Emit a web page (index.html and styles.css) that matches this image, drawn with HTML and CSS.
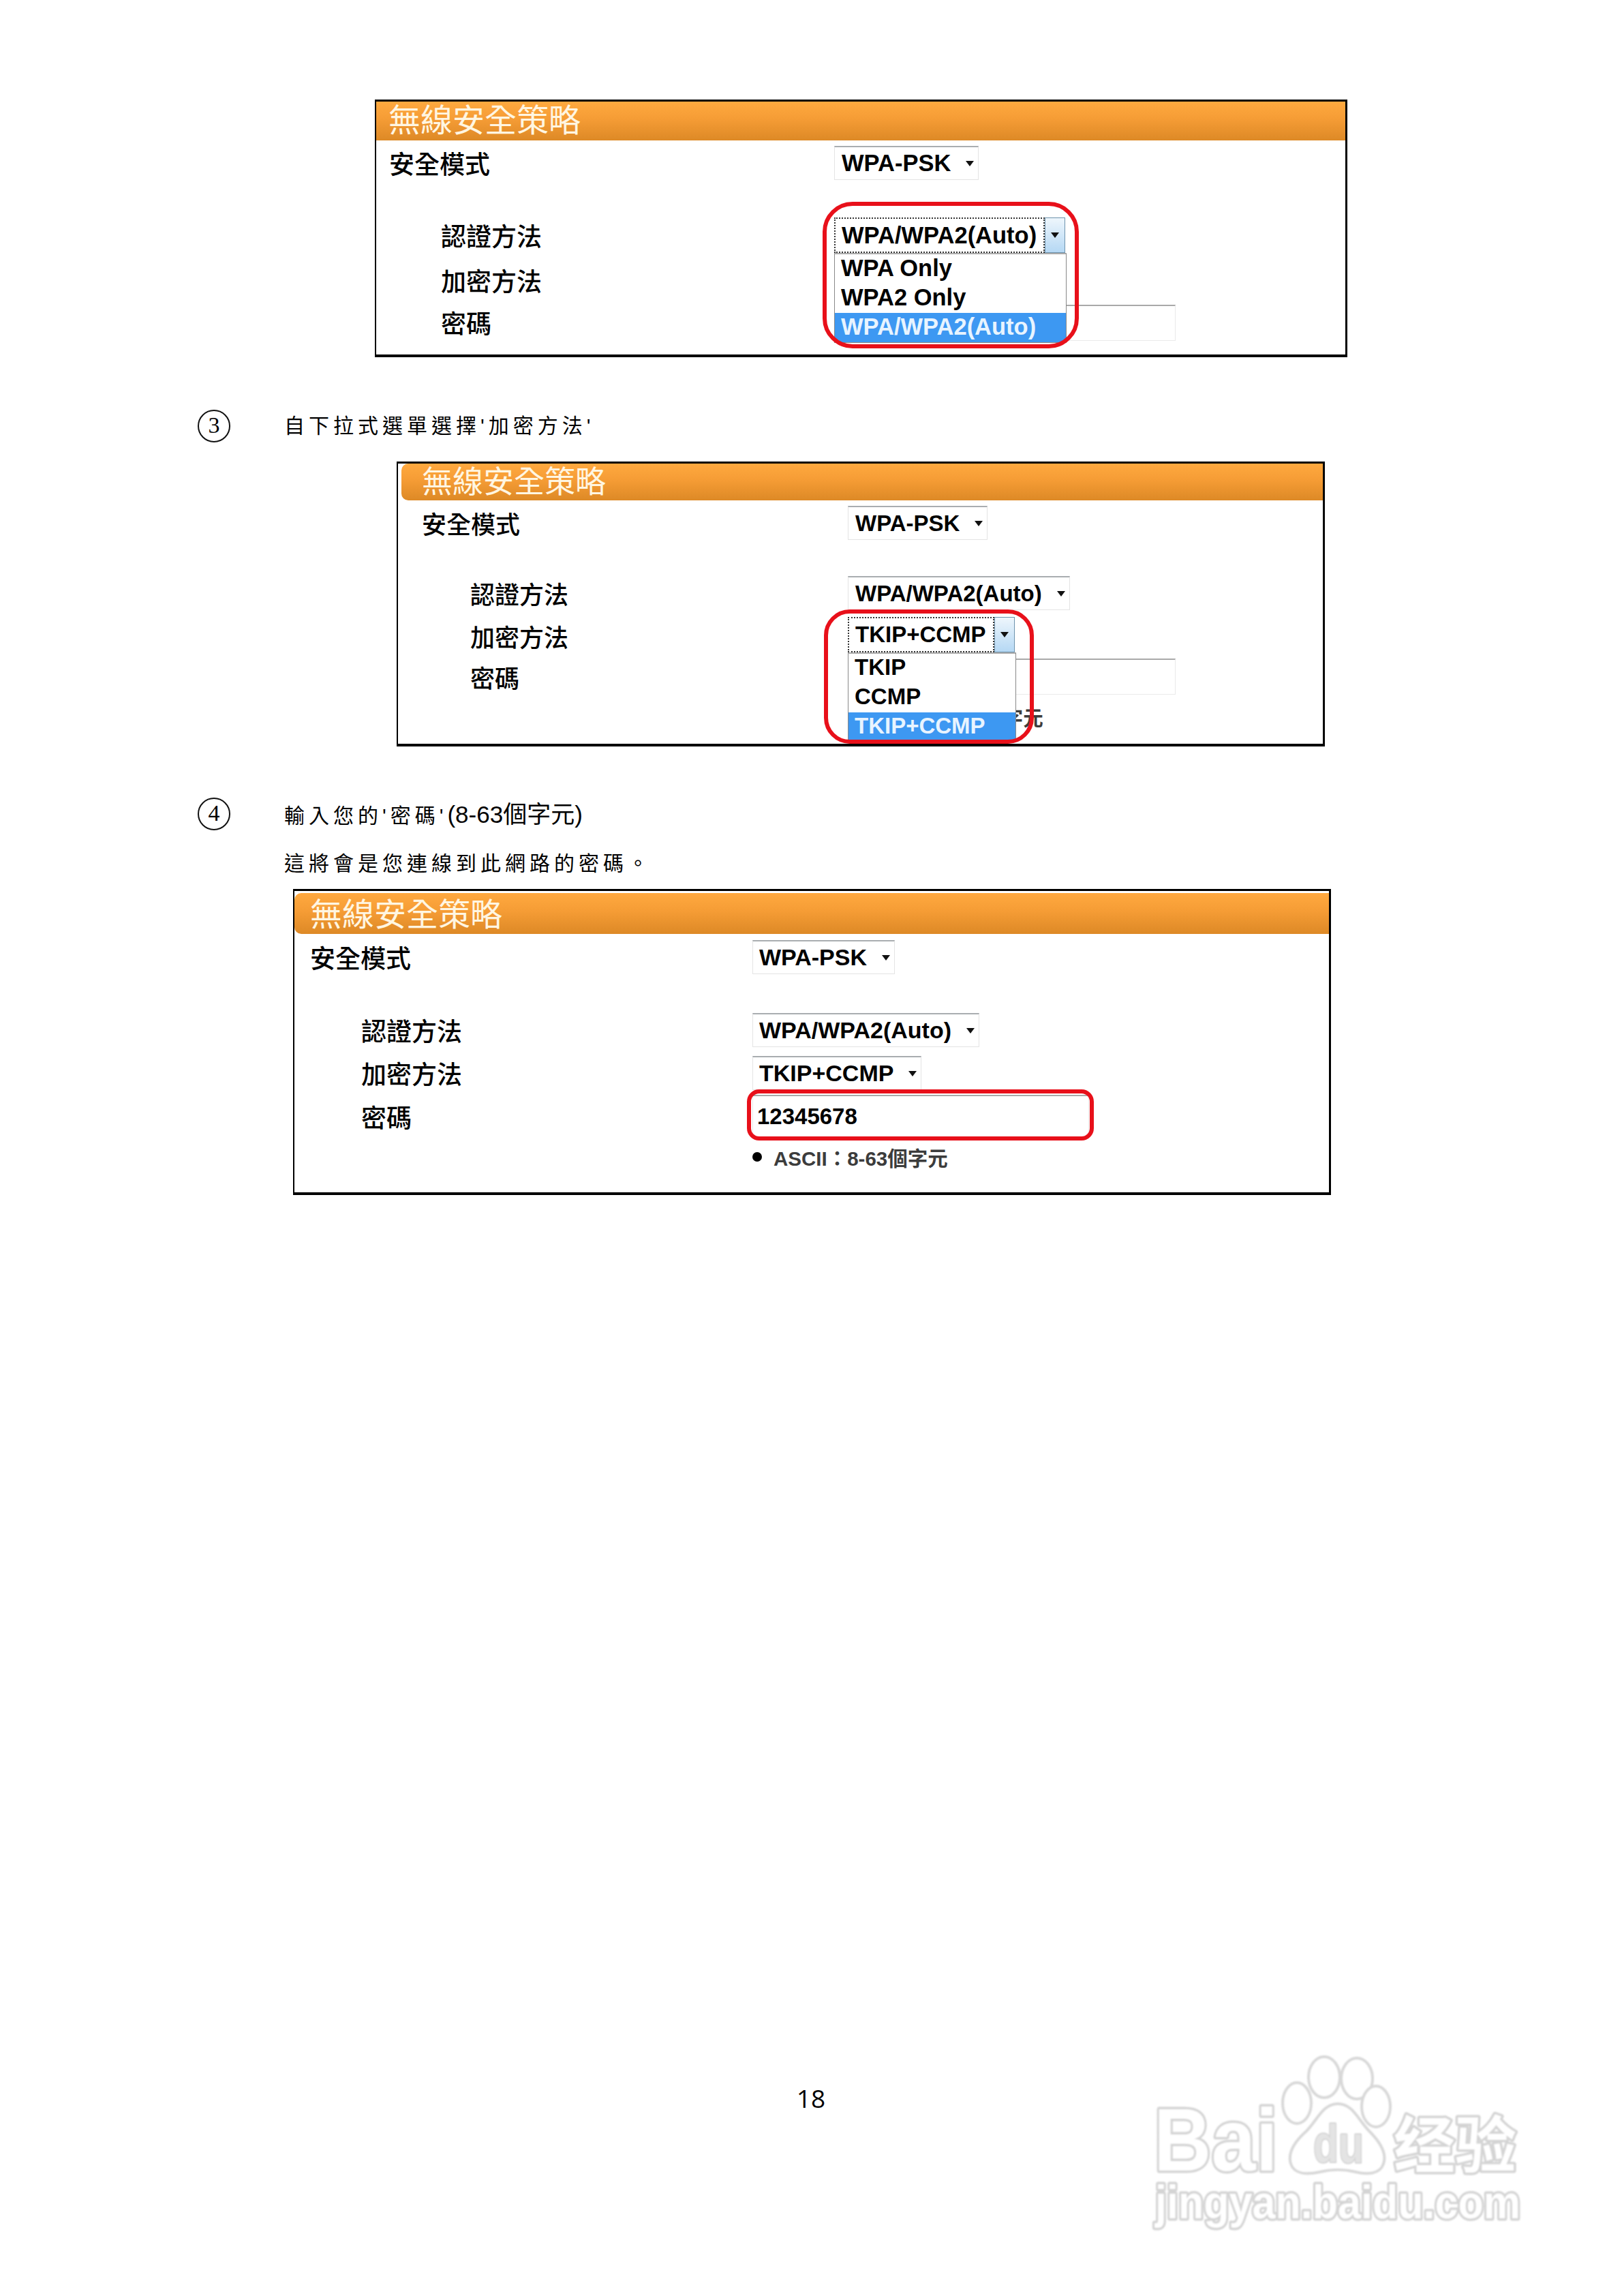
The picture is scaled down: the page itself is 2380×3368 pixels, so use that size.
FILE: index.html
```html
<!DOCTYPE html>
<html lang="zh-Hant">
<head>
  <meta charset="UTF-8">
  <title>無線安全策略</title>
  <link rel="stylesheet" href="styles.css">
</head>
<body>
  <div class="page">
    <!-- 認證方法 -->
    <section class="panel panel-auth">
      <h2 class="panel-title">無線安全策略</h2>
      <div class="row row-mode">
        <div class="label">安全模式</div>
        <div class="select">WPA-PSK<i class="arrow"></i></div>
      </div>
      <div class="row row-auth">
        <div class="label sub">認證方法</div>
        <div class="select open">
          <span class="focus-text">WPA/WPA2(Auto)</span><span class="drop-btn"><i class="arrow"></i></span>
          <ul class="popup">
            <li>WPA Only</li>
            <li>WPA2 Only</li>
            <li class="selected">WPA/WPA2(Auto)</li>
          </ul>
        </div>
      </div>
      <div class="row row-enc">
        <div class="label sub">加密方法</div>
      </div>
      <div class="row row-pass">
        <div class="label sub">密碼</div>
        <div class="input"></div>
      </div>
      <div class="ring"></div>
    </section>

    <div class="step step-three">
      <div class="num">3</div>
      <p>自下拉式選單選擇'加密方法'</p>
    </div>

    <!-- 加密方法 -->
    <section class="panel panel-enc">
      <h2 class="panel-title">無線安全策略</h2>
      <div class="row row-mode">
        <div class="label">安全模式</div>
        <div class="select">WPA-PSK<i class="arrow"></i></div>
      </div>
      <div class="row row-auth">
        <div class="label sub">認證方法</div>
        <div class="select">WPA/WPA2(Auto)<i class="arrow"></i></div>
      </div>
      <div class="row row-enc">
        <div class="label sub">加密方法</div>
        <div class="select open">
          <span class="focus-text">TKIP+CCMP</span><span class="drop-btn"><i class="arrow"></i></span>
          <ul class="popup">
            <li>TKIP</li>
            <li>CCMP</li>
            <li class="selected">TKIP+CCMP</li>
          </ul>
        </div>
      </div>
      <div class="row row-pass">
        <div class="label sub">密碼</div>
        <div class="input"></div>
      </div>
      <div class="row row-hint">
        <div></div>
        <div class="hint"><span class="bullet"></span>ASCII：8-63個字元</div>
      </div>
      <div class="ring"></div>
    </section>

    <div class="step step-four">
      <div class="num">4</div>
      <p>輸入您的'密碼'<span class="range">(8-63個字元)</span></p>
    </div>
    <p class="step-note">這將會是您連線到此網路的密碼。</p>

    <!-- 密碼 -->
    <section class="panel panel-pass">
      <h2 class="panel-title">無線安全策略</h2>
      <div class="row row-mode">
        <div class="label">安全模式</div>
        <div class="select">WPA-PSK<i class="arrow"></i></div>
      </div>
      <div class="row row-auth">
        <div class="label sub">認證方法</div>
        <div class="select">WPA/WPA2(Auto)<i class="arrow"></i></div>
      </div>
      <div class="row row-enc">
        <div class="label sub">加密方法</div>
        <div class="select">TKIP+CCMP<i class="arrow"></i></div>
      </div>
      <div class="row row-pass">
        <div class="label sub">密碼</div>
        <div class="input">12345678</div>
      </div>
      <div class="row row-hint">
        <div></div>
        <div class="hint"><span class="bullet"></span>ASCII：8-63個字元</div>
      </div>
      <div class="ring"></div>
    </section>

    <div class="page-num">18</div>

    <svg class="watermark" viewBox="0 0 541 262" width="541" height="262">
      <g class="mark-shape">
        <ellipse cx="250" cy="33" rx="23" ry="30"/>
        <ellipse cx="298" cy="35" rx="23" ry="30"/>
        <ellipse cx="210" cy="71" rx="21" ry="30"/>
        <ellipse cx="326" cy="76" rx="21" ry="30"/>
      </g>
      <text class="mark-text" x="0" y="170" font-size="130" textLength="182" lengthAdjust="spacingAndGlyphs">Bai</text>
      <path class="mark-shape" d="M270 72 C292 72 300 96 316 112 C334 130 342 146 337 160 C332 176 312 176 296 172 C280 168 260 168 244 172 C226 176 206 176 201 160 C196 144 206 128 224 112 C240 96 248 72 270 72 Z"/>
      <text class="mark-inner" x="234" y="158" font-size="78" textLength="74" lengthAdjust="spacingAndGlyphs">du</text>
      <text class="mark-text" x="352" y="165" font-size="90">经验</text>
      <text class="mark-text" x="2" y="240" font-size="68" textLength="536" lengthAdjust="spacingAndGlyphs">jingyan.baidu.com</text>
    </svg>
  </div>
</body>
</html>
```

FILE: styles.css
```css
body {
  margin: 0;
  background: #fff;
  color: #000;
  font-family: "Noto Sans CJK TC", "Liberation Sans", sans-serif;
}

.page {
  position: relative;
  width: 2380px;
  height: 3368px;
  overflow: hidden;
  padding-top: 146px;
  box-sizing: border-box;
}

/* panels */
.panel {
  position: relative;
  box-sizing: border-box;
  border: 2px solid #000;
  border-top-width: 3px;
  border-bottom-width: 4px;
  border-right-width: 3px;
  background: #fff;
}

.panel-title {
  margin: 0;
  box-sizing: border-box;
  display: flex;
  align-items: center;
  font-weight: 400;
  color: #fff6e2;
  background: linear-gradient(#ffa93f, #f59c35 45%, #dd8926);
}

.panel-auth {
  margin-left: 550px;
  width: 1427px;
  height: 378px;
  --ctrl-x: 672px;
  --label-x: 19px;
  --sub-x: 95px;
  --label-size: 37px;
  --select-size: 34.5px;
}

.panel-auth .panel-title {
  height: 57px;
  padding: 0 0 11px 18px;
  font-size: 47px;
}

.panel-enc {
  margin-left: 582px;
  margin-top: 28px;
  width: 1362px;
  height: 418px;
  --ctrl-x: 660px;
  --label-x: 35px;
  --sub-x: 106px;
  --label-size: 36px;
  --select-size: 33px;
}

.panel-enc .panel-title {
  height: 54px;
  margin-left: 5px;
  padding: 0 0 8px 30px;
  font-size: 45px;
  border-bottom-left-radius: 10px;
  border-top-left-radius: 10px;
}

.panel-pass {
  margin-left: 430px;
  margin-top: 17px;
  width: 1523px;
  height: 449px;
  --ctrl-x: 672px;
  --label-x: 23px;
  --sub-x: 98px;
  --label-size: 37px;
  --select-size: 34px;
}

.panel-pass .panel-title {
  height: 60px;
  margin-top: 3px;
  padding: 0 0 6px 23px;
  font-size: 47px;
  border-radius: 10px 0 0 10px;
}

/* rows */
.row {
  display: grid;
  grid-template-columns: var(--ctrl-x) 1fr;
  align-items: center;
  height: 50px;
}

.label {
  padding-left: var(--label-x);
  font-size: var(--label-size);
  font-weight: 500;
  line-height: 1;
}

.label.sub {
  padding-left: var(--sub-x);
}

.panel-auth .row-mode { margin-top: 8px; }
.panel-auth .row-auth { margin-top: 55px; }
.panel-auth .row-enc { margin-top: 17px; }
.panel-auth .row-pass { margin-top: 11px; }

.panel-enc .row-mode { margin-top: 8px; }
.panel-enc .row-auth { margin-top: 53px; }
.panel-enc .row-enc { margin-top: 10px; }
.panel-enc .row-pass { margin-top: 11px; }
.panel-enc .row-hint { margin-top: 10px; }

.panel-pass .row-mode { margin-top: 9px; }
.panel-pass .row-auth { margin-top: 57px; }
.panel-pass .row-enc { margin-top: 13px; }
.panel-pass .row-pass { margin-top: 7px; }
.panel-pass .row-hint { margin-top: 16px; }

/* controls */
.select {
  position: relative;
  justify-self: start;
  display: inline-flex;
  align-items: center;
  box-sizing: border-box;
  height: 50px;
  padding: 0 6px 0 10px;
  border: 1px solid #e4e4e4;
  border-top: 2px solid #a9adb0;
  font-family: "Liberation Sans", sans-serif;
  font-size: var(--select-size);
  font-weight: 700;
}

.panel-pass .select {
  padding-left: 9px;
}

.arrow {
  display: block;
  width: 0;
  height: 0;
  margin-left: 22px;
  border-left: 6px solid transparent;
  border-right: 6px solid transparent;
  border-top: 8px solid #111;
}

.select.open {
  padding: 0;
  border: 0;
  height: 52px;
  z-index: 1;
}

.panel-enc .select.open {
  margin-bottom: 4px;
}

.focus-text {
  box-sizing: border-box;
  height: 100%;
  display: flex;
  align-items: center;
  padding: 0 10px 0 9px;
  border: 2px dotted #333;
}

.drop-btn {
  display: flex;
  align-items: center;
  justify-content: center;
  width: 30px;
  height: 100%;
  box-sizing: border-box;
  border: 1px solid #6d93ad;
  background: linear-gradient(#eef6fc, #b5d8f4);
}

.drop-btn .arrow {
  margin-left: 0;
}

.popup {
  position: absolute;
  top: 52px;
  left: 0;
  right: -2px;
  margin: 0;
  padding: 0;
  list-style: none;
  background: #fff;
  border: 1px solid #888;
  border-top: 2px solid #aaa;
}

.popup li {
  height: 43px;
  line-height: 40px;
  padding-left: 9px;
  font-size: var(--select-size);
}

.popup li.selected {
  background: #3d98f2;
  color: #e8f4ff;
}

.input {
  justify-self: start;
  box-sizing: border-box;
  height: 53px;
  padding-left: 6px;
  display: flex;
  align-items: center;
  border: 1px solid #eaeaea;
  border-top: 2px solid #a9a9a9;
  font-family: "Liberation Sans", sans-serif;
  font-size: 33px;
  font-weight: 700;
}

.panel-auth .input { width: 501px; }
.panel-enc .input { width: 481px; }
.panel-pass .input { width: 494px; height: 62px; margin-bottom: 2px; }

.hint {
  display: flex;
  align-items: center;
  font-family: "Liberation Sans", "Noto Sans CJK TC", sans-serif;
  font-size: 29.5px;
  font-weight: 700;
  color: #3c3c3c;
  white-space: nowrap;
}

.bullet {
  width: 14px;
  height: 14px;
  margin: 0 17px 0 0;
  border-radius: 50%;
  background: #000;
}

/* red marks */
.ring {
  position: absolute;
  box-sizing: border-box;
  border: 6px solid #e8101a;
  z-index: 2;
}

.panel-auth .ring {
  left: 655px;
  top: 147px;
  width: 376px;
  height: 215px;
  border-radius: 44px;
}

.panel-enc .ring {
  left: 625px;
  top: 214px;
  width: 308px;
  height: 197px;
  border-radius: 38px;
}

.panel-pass .ring {
  left: 664px;
  top: 291px;
  width: 509px;
  height: 75px;
  border-radius: 18px;
}

/* step text */
.step {
  display: flex;
  align-items: center;
  gap: 79px;
  height: 48px;
  margin: 77px 0 0 290px;
}

.step-four {
  margin-top: 75px;
}

.step p,
.step-note {
  margin: 0;
  font-family: "Liberation Sans", "Noto Sans CJK TC", sans-serif;
  font-size: 30px;
  letter-spacing: 6px;
  white-space: nowrap;
}

.step p {
  padding-bottom: 6px;
}

.range {
  font-size: 35px;
  letter-spacing: 0;
}

.num {
  box-sizing: border-box;
  flex: none;
  width: 48px;
  height: 48px;
  border: 2px solid #111;
  border-radius: 50%;
  text-align: center;
  line-height: 42px;
  font-family: "Liberation Serif", serif;
  font-size: 34px;
}

.step-note {
  margin: 29px 0 0 417px;
  height: 40px;
  line-height: 40px;
}

.page-num {
  margin-top: 1300px;
  height: 50px;
  line-height: 50px;
  text-align: center;
  font-family: "Open Sans", sans-serif;
  font-size: 37px;
}

/* watermark */
.watermark {
  position: absolute;
  left: 1693px;
  top: 3014px;
  overflow: visible;
  filter: blur(0.8px);
}

.mark-shape {
  fill: #fff;
  stroke: #d8d8d8;
  stroke-width: 4;
}

.mark-text,
.mark-inner {
  font-family: "Liberation Sans", "Noto Sans CJK SC", sans-serif;
  font-weight: 700;
  fill: #fff;
  stroke: #d4d4d4;
  stroke-width: 7;
  stroke-linejoin: round;
  paint-order: stroke;
}

.mark-inner {
  fill: #e4e4e4;
  stroke: #cfcfcf;
  stroke-width: 3;
}
```
